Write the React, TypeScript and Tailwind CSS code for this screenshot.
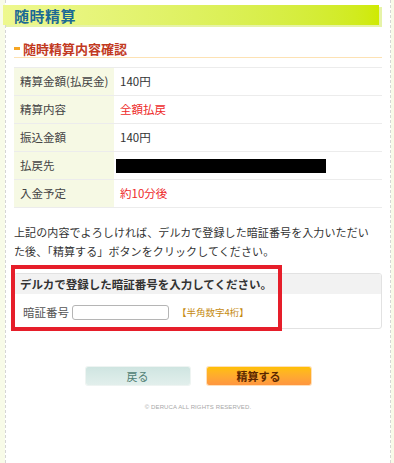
const rows: { label: string; value?: string; red?: boolean; redacted?: boolean }[] = [
  { label: "精算金額(払戻金)", value: "140円" },
  { label: "精算内容", value: "全額払戻", red: true },
  { label: "振込金額", value: "140円" },
  { label: "払戻先", redacted: true },
  { label: "入金予定", value: "約10分後", red: true },
];

export default function App() {
  return (
    <div className="w-[394px] h-[463px] overflow-hidden bg-[#f8fbe8] font-['Noto_Sans_CJK_JP',sans-serif] text-[#333]">
      <div className="relative ml-[5px] w-[386px] h-full bg-white border-x border-dashed border-[#d6d6d6] pt-[5px]">
        {/* title bar */}
        <div className="-ml-[3px] w-[376px] h-[20px] bg-linear-to-r from-[#eef88e] to-[#cfea00] shadow-[3px_2px_0_#e6f3a8] flex items-center pl-[11px]">
          <span className="text-[15px] leading-none font-bold text-[#1b6a95] tracking-[0.5px]">随時精算</span>
        </div>

        {/* sub heading */}
        <div className="mt-[16px] mx-[8px] pb-[1px] border-b border-[#fde2b4] flex items-center gap-[3px] h-[17px]">
          <span className="w-[6px] h-[3px] bg-[#f6a623]" />
          <span className="text-[13px] leading-none font-bold text-[#c23a1f]">随時精算内容確認</span>
        </div>

        {/* detail table */}
        <div className="mt-[9px] mx-[8px] border-t border-[#ececec] text-[11.5px]">
          {rows.map((r) => (
            <div key={r.label} className="flex h-[28px] border-b border-[#ececec]">
              <div className="w-[100px] bg-[#f6f9e4] flex items-center pl-[6px] text-[#444]">{r.label}</div>
              <div className="flex-1 flex items-center pl-[6px]">
                {r.redacted ? (
                  <div className="-ml-[4px] w-[210px] h-[14px] bg-black" />
                ) : (
                  <span className={r.red ? "text-[#ee2a2a]" : "text-[#333]"}>{r.value}</span>
                )}
              </div>
            </div>
          ))}
        </div>

        {/* notice */}
        <p className="mt-[15px] mx-[8px] text-[11px] leading-[19px] tracking-[0.1px] text-[#333]">
          上記の内容でよろしければ、デルカで登録した暗証番号を入力いただい
          <br />
          た後、「精算する」ボタンをクリックしてください。
        </p>

        {/* pin box */}
        <div className="mt-[12px] ml-[8px] w-[368px] border border-[#e2e2e2] rounded-[3px] overflow-hidden">
          <div className="h-[20px] bg-[#f2f2f2] flex items-center pl-[5px] pt-[2px]">
            <span className="text-[11.5px] font-bold text-[#333]">デルカで登録した暗証番号を入力してください。</span>
          </div>
          <div className="h-[34px] flex items-center pl-[8px] pt-[3px] text-[11.5px]">
            <span className="text-[#555]">暗証番号</span>
            <input className="ml-[3px] w-[97px] h-[15px] border border-[#b5b5b5] rounded-[3px] bg-white" />
            <span className="ml-[8px] text-[9.5px] text-[#c58a12]">【半角数字4桁】</span>
          </div>
        </div>

        {/* annotation */}
        <div className="absolute left-[5px] top-[265px] w-[271px] h-[66px] border-[4px] border-[#e61e2a]" />

        {/* buttons */}
        <div className="mt-[38px] flex justify-center gap-[17px]">
          <button className="w-[104px] h-[18px] rounded-[2px] bg-linear-to-b from-[#cfe5e1] to-[#e2efec] shadow-[0_0_0_1px_#eef4f2] text-[11px] leading-none text-[#4e7d73]">
            戻る
          </button>
          <button className="w-[104px] h-[18px] rounded-[2px] bg-linear-to-b from-[#ffc000] to-[#ff9640] shadow-[0_0_0_1px_#ffe0b8] text-[11px] leading-none font-bold text-[#5a2600]">
            精算する
          </button>
        </div>

        <div className="mt-[18px] text-center text-[6px] font-['Liberation_Sans',sans-serif] text-[#a8a8a8] tracking-[0.1px]">
          © DERUCA ALL RIGHTS RESERVED.
        </div>
      </div>
    </div>
  );
}
